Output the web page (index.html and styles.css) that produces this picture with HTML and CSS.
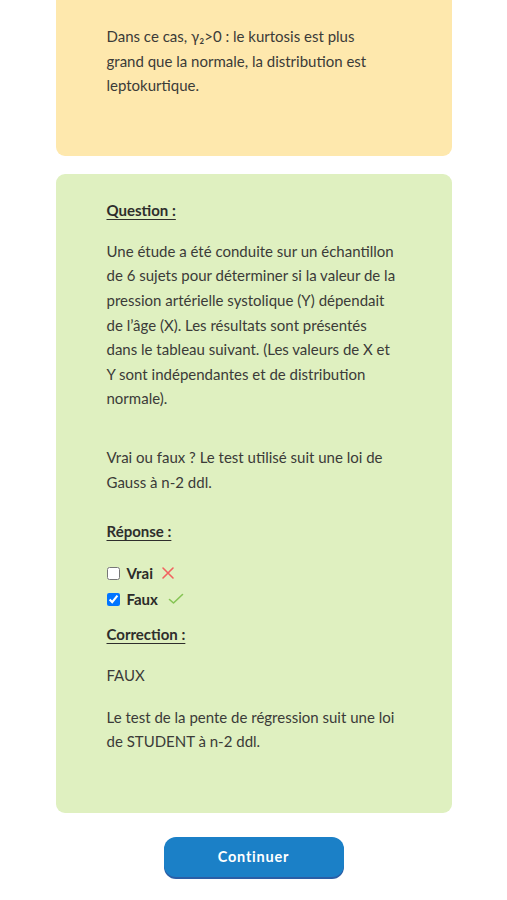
FILE: index.html
```html
<!DOCTYPE html>
<html lang="fr">
<head>
<meta charset="utf-8">
<title>Quiz</title>
<link rel="stylesheet" href="styles.css">
</head>
<body>
<main class="page">
  <section class="card card-info">
    <p class="text">Dans ce cas, γ₂&gt;0 : le kurtosis est plus grand que la normale, la distribution est leptokurtique.</p>
  </section>

  <section class="card card-question">
    <h3 class="label">Question :</h3>
    <p class="text">Une étude a été conduite sur un échantillon de 6 sujets pour déterminer si la valeur de la pression artérielle systolique (Y) dépendait de l’âge (X). Les résultats sont présentés dans le tableau suivant. (Les valeurs de X et Y sont indépendantes et de distribution normale).</p>
    <p class="text prompt">Vrai ou faux ? Le test utilisé suit une loi de Gauss à n-2 ddl.</p>

    <h3 class="label label-answer">Réponse :</h3>
    <ul class="choices">
      <li class="choice">
        <input type="checkbox" class="box">
        <span class="choice-text">Vrai</span>
        <svg class="mark" width="14" height="14" viewBox="0 0 14 14"><path d="M2 2 L12 12 M12 2 L2 12" stroke="#f2625f" stroke-width="1.6" fill="none" stroke-linecap="round"/></svg>
      </li>
      <li class="choice">
        <input type="checkbox" class="box" checked>
        <span class="choice-text">Faux</span>
        <svg class="mark mark-ok" width="16" height="12" viewBox="0 0 16 12"><path d="M1.5 6.5 L5.5 10 L14.5 1.5" stroke="#86c454" stroke-width="1.6" fill="none" stroke-linecap="round" stroke-linejoin="round"/></svg>
      </li>
    </ul>

    <h3 class="label label-correction">Correction :</h3>
    <p class="text">FAUX</p>
    <p class="text">Le test de la pente de régression suit une loi de STUDENT à n-2 ddl.</p>
  </section>

  <div class="actions">
    <button class="btn" type="button">Continuer</button>
  </div>
</main>
</body>
</html>
```

FILE: styles.css
```css
* { box-sizing: border-box; }

html, body {
  margin: 0;
  padding: 0;
  background: #ffffff;
}

body {
  font-family: "Lato", "Noto Sans", sans-serif;
  font-size: 15px;
  line-height: 24.6px;
  color: #3b3b38;
}

.page {
  width: 396px;
  margin: 0 auto;
  display: flex;
  flex-direction: column;
}

.card {
  padding: 0 52px 0 51px;
  border-radius: 9px;
}

.card-info {
  background: #fee8ad;
  border-radius: 0 0 9px 9px;
  padding-top: 24px;
  padding-right: 72px;
  padding-bottom: 58px;
}

.card-question {
  background: #dff0c0;
  margin-top: 18px;
  padding-top: 24px;
  padding-bottom: 59px;
}

.text {
  margin: 0;
}

.card-question .text + .text {
  margin-top: 16.5px;
}

.card-question .text.prompt {
  margin-top: 34px;
}

.label {
  margin: 0 0 16.5px;
  font-size: 15px;
  font-weight: 700;
  text-decoration: underline;
  text-underline-offset: 3px;
  color: #2e2e2c;
}

.label-answer {
  margin-top: 25px;
}

.choices {
  list-style: none;
  margin: 0;
  padding: 0;
}

.choice {
  display: flex;
  align-items: center;
  height: 26px;
}

.box {
  width: 13px;
  height: 13px;
  margin: 0 7px 0 0;
}

.choice-text {
  font-weight: 700;
  color: #2b2b29;
}

.mark {
  margin-left: 8px;
}

.mark-ok {
  margin-left: 10px;
}

.label-correction {
  margin-top: 10px;
}

.actions {
  display: flex;
  justify-content: center;
  padding: 24px 0 22px;
}

.btn {
  width: 180px;
  height: 40px;
  border: none;
  border-radius: 12px;
  background: #1b80c7;
  box-shadow: 0 2px 0 #2b5ea6;
  color: #ffffff;
  font-family: "Lato", sans-serif;
  font-size: 14.5px;
  font-weight: 700;
  letter-spacing: 0.8px;
}
```
